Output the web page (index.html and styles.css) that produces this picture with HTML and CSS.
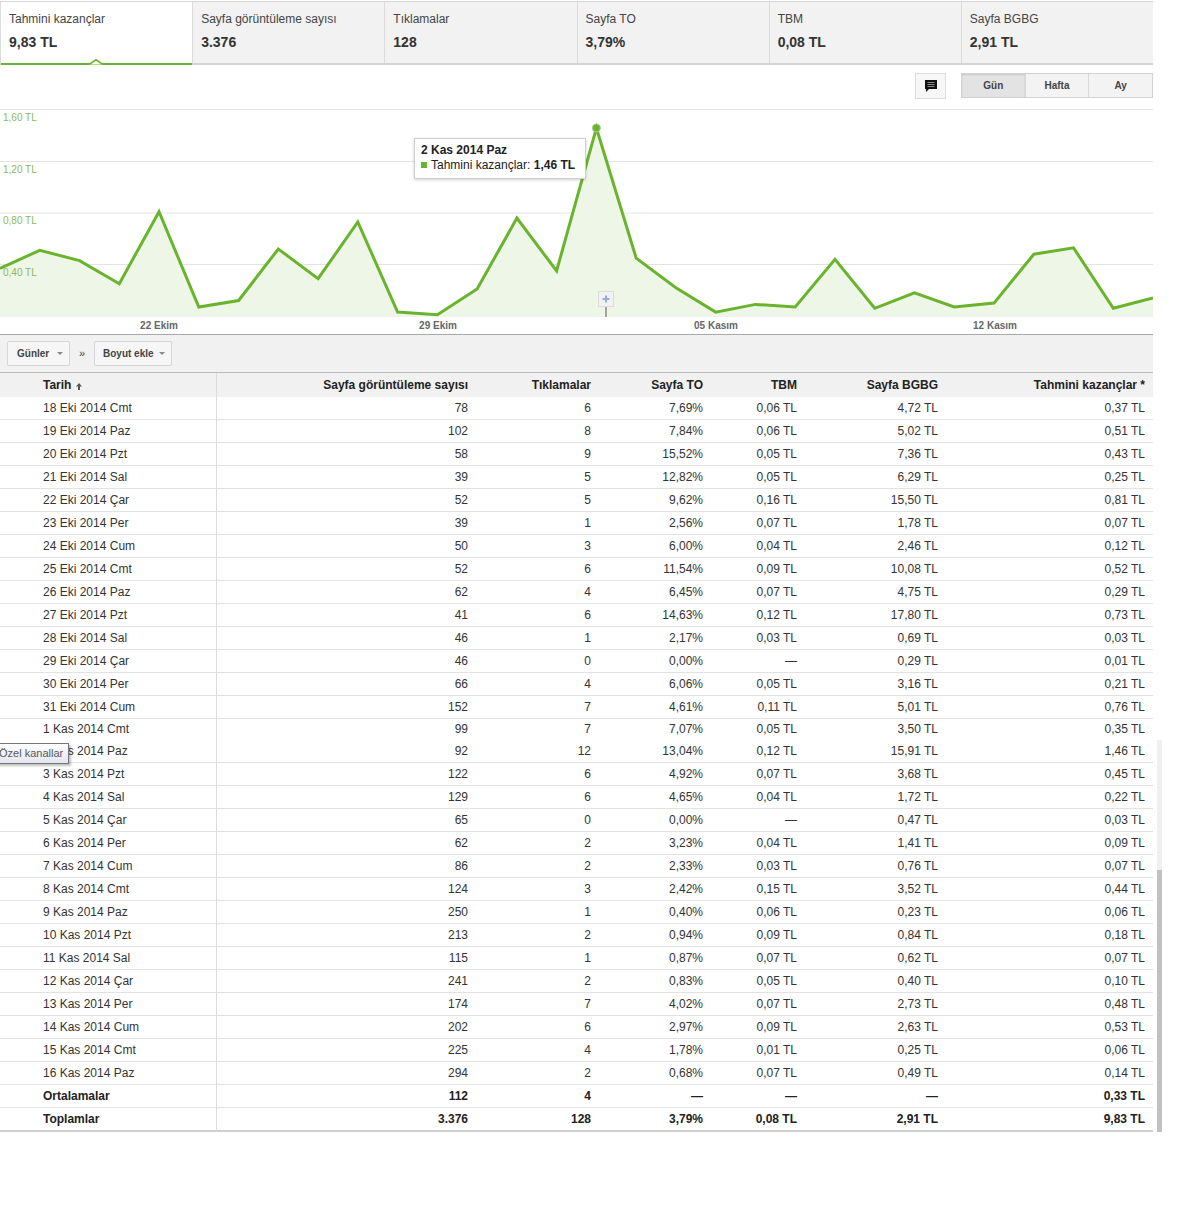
FILE: index.html
```html
<!DOCTYPE html>
<html lang="tr">
<head>
<meta charset="utf-8">
<title>Performans raporu</title>
<link rel="stylesheet" href="styles.css">
</head>
<body>
<div class="page">
  <div class="tabs">
    <div class="tab active">
      <div class="tab-label">Tahmini kazançlar</div>
      <div class="tab-value">9,83 TL</div>
      <svg class="notch" width="14" height="6" viewBox="0 0 14 6"><polyline points="0,5.5 7,0.8 14,5.5" fill="#fff" stroke="#6ab42d" stroke-width="1.6"/></svg>
    </div>
    <div class="tab"><div class="tab-label">Sayfa görüntüleme sayısı</div><div class="tab-value">3.376</div></div>
    <div class="tab"><div class="tab-label">Tıklamalar</div><div class="tab-value">128</div></div>
    <div class="tab"><div class="tab-label">Sayfa TO</div><div class="tab-value">3,79%</div></div>
    <div class="tab"><div class="tab-label">TBM</div><div class="tab-value">0,08 TL</div></div>
    <div class="tab"><div class="tab-label">Sayfa BGBG</div><div class="tab-value">2,91 TL</div></div>
  </div>

  <div class="controls">
    <div class="note-btn">
      <svg width="12" height="13" viewBox="0 0 12 13"><path d="M0 0H12V9H4L1 12V9H0Z" fill="#111"/><path d="M2.5 2.5H9.5M2.5 4.5H9.5M2.5 6.5H9.5" stroke="#8a8a8a" stroke-width="1"/></svg>
    </div>
    <div class="seg">
      <span class="on">Gün</span>
      <span>Hafta</span>
      <span>Ay</span>
    </div>
  </div>

  <div class="chart">
    <svg class="chart-svg" width="1153" height="225" viewBox="0 0 1153 225">
      <g stroke="#e3e3e3" stroke-width="1">
        <line x1="0" y1="0.5" x2="1153" y2="0.5"/>
        <line x1="0" y1="52.5" x2="1153" y2="52.5"/>
        <line x1="0" y1="104" x2="1153" y2="104"/>
        <line x1="0" y1="155.5" x2="1153" y2="155.5"/>
        <line x1="0" y1="207" x2="1153" y2="207"/>
      </g>
      <polygon fill="#eef6e7" points="0,159.4 39.8,141.3 79.5,151.6 119.3,174.8 159,102.7 198.8,198 238.6,191.5 278.3,140 318.1,169.7 357.8,113 397.6,203.1 437.4,205.7 477.1,180 516.9,109.1 556.6,161.9 596.4,19 636.2,149.1 675.9,178.7 715.7,203.1 755.4,195.4 795.2,198 835,150.4 874.7,199.3 914.5,183.8 954.2,198 994,194.1 1033.8,145.2 1073.5,138.8 1113.3,199.3 1153,189 1153,207 0,207"/>
      <g class="ylab">
        <text x="3" y="12">1,60 TL</text>
        <text x="3" y="64">1,20 TL</text>
        <text x="3" y="115">0,80 TL</text>
        <text x="3" y="167">0,40 TL</text>
      </g>
      <line x1="606" y1="198" x2="606" y2="208" stroke="#555" stroke-width="1"/>
      <rect x="598.5" y="182.5" width="15" height="15" fill="#f2f2f2" stroke="#dcdcdc"/>
      <path d="M606 186.5V193.5M602.5 190H609.5" stroke="#8fb0d8" stroke-width="2"/>
      <polyline fill="none" stroke="#6ab42d" stroke-width="3" stroke-linejoin="miter" points="0,159.4 39.8,141.3 79.5,151.6 119.3,174.8 159,102.7 198.8,198 238.6,191.5 278.3,140 318.1,169.7 357.8,113 397.6,203.1 437.4,205.7 477.1,180 516.9,109.1 556.6,161.9 596.4,19 636.2,149.1 675.9,178.7 715.7,203.1 755.4,195.4 795.2,198 835,150.4 874.7,199.3 914.5,183.8 954.2,198 994,194.1 1033.8,145.2 1073.5,138.8 1113.3,199.3 1153,189"/>
      <circle cx="596.4" cy="19" r="4" fill="#6ab42d" stroke="#a8c99a" stroke-width="1"/>
      <g class="xlab">
        <text x="159" y="220">22 Ekim</text>
        <text x="438" y="220">29 Ekim</text>
        <text x="716" y="220">05 Kasım</text>
        <text x="995" y="220">12 Kasım</text>
      </g>
    </svg>
    <div class="chart-tip">
      <div class="tip-title">2 Kas 2014 Paz</div>
      <div class="tip-line"><span class="tip-dot"></span>Tahmini kazançlar: <b>1,46 TL</b></div>
    </div>
  </div>

  <div class="tablebar">
    <div class="tb-btn wide">Günler <span class="caret"></span></div>
    <span class="raquo">»</span>
    <div class="tb-btn">Boyut ekle <span class="caret"></span></div>
  </div>

  <table class="report">
    <colgroup>
      <col class="c1"><col class="c2"><col class="c3"><col class="c4"><col class="c5"><col class="c6"><col class="c7">
    </colgroup>
    <thead>
      <tr>
        <th class="date">Tarih <svg class="sort" width="6" height="7" viewBox="0 0 6 7"><path d="M3 0L6 3.5H4V7H2V3.5H0Z" fill="#555"/></svg></th>
        <th>Sayfa görüntüleme sayısı</th>
        <th>Tıklamalar</th>
        <th>Sayfa TO</th>
        <th>TBM</th>
        <th>Sayfa BGBG</th>
        <th>Tahmini kazançlar *</th>
      </tr>
    </thead>
    <tbody>
      <tr><td>18 Eki 2014 Cmt</td><td>78</td><td>6</td><td>7,69%</td><td>0,06 TL</td><td>4,72 TL</td><td>0,37 TL</td></tr>
      <tr><td>19 Eki 2014 Paz</td><td>102</td><td>8</td><td>7,84%</td><td>0,06 TL</td><td>5,02 TL</td><td>0,51 TL</td></tr>
      <tr><td>20 Eki 2014 Pzt</td><td>58</td><td>9</td><td>15,52%</td><td>0,05 TL</td><td>7,36 TL</td><td>0,43 TL</td></tr>
      <tr><td>21 Eki 2014 Sal</td><td>39</td><td>5</td><td>12,82%</td><td>0,05 TL</td><td>6,29 TL</td><td>0,25 TL</td></tr>
      <tr><td>22 Eki 2014 Çar</td><td>52</td><td>5</td><td>9,62%</td><td>0,16 TL</td><td>15,50 TL</td><td>0,81 TL</td></tr>
      <tr><td>23 Eki 2014 Per</td><td>39</td><td>1</td><td>2,56%</td><td>0,07 TL</td><td>1,78 TL</td><td>0,07 TL</td></tr>
      <tr><td>24 Eki 2014 Cum</td><td>50</td><td>3</td><td>6,00%</td><td>0,04 TL</td><td>2,46 TL</td><td>0,12 TL</td></tr>
      <tr><td>25 Eki 2014 Cmt</td><td>52</td><td>6</td><td>11,54%</td><td>0,09 TL</td><td>10,08 TL</td><td>0,52 TL</td></tr>
      <tr><td>26 Eki 2014 Paz</td><td>62</td><td>4</td><td>6,45%</td><td>0,07 TL</td><td>4,75 TL</td><td>0,29 TL</td></tr>
      <tr><td>27 Eki 2014 Pzt</td><td>41</td><td>6</td><td>14,63%</td><td>0,12 TL</td><td>17,80 TL</td><td>0,73 TL</td></tr>
      <tr><td>28 Eki 2014 Sal</td><td>46</td><td>1</td><td>2,17%</td><td>0,03 TL</td><td>0,69 TL</td><td>0,03 TL</td></tr>
      <tr><td>29 Eki 2014 Çar</td><td>46</td><td>0</td><td>0,00%</td><td>—</td><td>0,29 TL</td><td>0,01 TL</td></tr>
      <tr><td>30 Eki 2014 Per</td><td>66</td><td>4</td><td>6,06%</td><td>0,05 TL</td><td>3,16 TL</td><td>0,21 TL</td></tr>
      <tr><td>31 Eki 2014 Cum</td><td>152</td><td>7</td><td>4,61%</td><td>0,11 TL</td><td>5,01 TL</td><td>0,76 TL</td></tr>
      <tr class="joined"><td>1 Kas 2014 Cmt</td><td>99</td><td>7</td><td>7,07%</td><td>0,05 TL</td><td>3,50 TL</td><td>0,35 TL</td></tr>
      <tr><td>2 Kas 2014 Paz</td><td>92</td><td>12</td><td>13,04%</td><td>0,12 TL</td><td>15,91 TL</td><td>1,46 TL</td></tr>
      <tr><td>3 Kas 2014 Pzt</td><td>122</td><td>6</td><td>4,92%</td><td>0,07 TL</td><td>3,68 TL</td><td>0,45 TL</td></tr>
      <tr><td>4 Kas 2014 Sal</td><td>129</td><td>6</td><td>4,65%</td><td>0,04 TL</td><td>1,72 TL</td><td>0,22 TL</td></tr>
      <tr><td>5 Kas 2014 Çar</td><td>65</td><td>0</td><td>0,00%</td><td>—</td><td>0,47 TL</td><td>0,03 TL</td></tr>
      <tr><td>6 Kas 2014 Per</td><td>62</td><td>2</td><td>3,23%</td><td>0,04 TL</td><td>1,41 TL</td><td>0,09 TL</td></tr>
      <tr><td>7 Kas 2014 Cum</td><td>86</td><td>2</td><td>2,33%</td><td>0,03 TL</td><td>0,76 TL</td><td>0,07 TL</td></tr>
      <tr><td>8 Kas 2014 Cmt</td><td>124</td><td>3</td><td>2,42%</td><td>0,15 TL</td><td>3,52 TL</td><td>0,44 TL</td></tr>
      <tr><td>9 Kas 2014 Paz</td><td>250</td><td>1</td><td>0,40%</td><td>0,06 TL</td><td>0,23 TL</td><td>0,06 TL</td></tr>
      <tr><td>10 Kas 2014 Pzt</td><td>213</td><td>2</td><td>0,94%</td><td>0,09 TL</td><td>0,84 TL</td><td>0,18 TL</td></tr>
      <tr><td>11 Kas 2014 Sal</td><td>115</td><td>1</td><td>0,87%</td><td>0,07 TL</td><td>0,62 TL</td><td>0,07 TL</td></tr>
      <tr><td>12 Kas 2014 Çar</td><td>241</td><td>2</td><td>0,83%</td><td>0,05 TL</td><td>0,40 TL</td><td>0,10 TL</td></tr>
      <tr><td>13 Kas 2014 Per</td><td>174</td><td>7</td><td>4,02%</td><td>0,07 TL</td><td>2,73 TL</td><td>0,48 TL</td></tr>
      <tr><td>14 Kas 2014 Cum</td><td>202</td><td>6</td><td>2,97%</td><td>0,09 TL</td><td>2,63 TL</td><td>0,53 TL</td></tr>
      <tr><td>15 Kas 2014 Cmt</td><td>225</td><td>4</td><td>1,78%</td><td>0,01 TL</td><td>0,25 TL</td><td>0,06 TL</td></tr>
      <tr><td>16 Kas 2014 Paz</td><td>294</td><td>2</td><td>0,68%</td><td>0,07 TL</td><td>0,49 TL</td><td>0,14 TL</td></tr>
      <tr class="sum"><td>Ortalamalar</td><td>112</td><td>4</td><td>—</td><td>—</td><td>—</td><td>0,33 TL</td></tr>
      <tr class="sum last"><td>Toplamlar</td><td>3.376</td><td>128</td><td>3,79%</td><td>0,08 TL</td><td>2,91 TL</td><td>9,83 TL</td></tr>
    </tbody>
  </table>
</div>

<div class="vscroll"><div class="vthumb"></div></div>
<div class="os-tip">Özel kanallar</div>
</body>
</html>
```

FILE: styles.css
```css
* {
  box-sizing: border-box;
}

html, body {
  background: #fff;
}

body {
  margin: 0;
  font-family: "Liberation Sans", Arial, sans-serif;
  color: #333;
  position: relative;
}

.page {
  width: 1153px;
}

/* ---------- metric tabs ---------- */
.tabs {
  display: grid;
  grid-template-columns: repeat(6, 1fr);
  margin-top: 1px;
  border-top: 1px solid #d6d6d6;
  border-bottom: 2px solid #d4d4d4;
}

.tab {
  position: relative;
  height: 61px;
  padding: 9px 0 0 8px;
  background: #f2f2f2;
  border-left: 1px solid #dcdcdc;
}

.tab.active {
  background: #fff;
}

.tab.active::after {
  content: "";
  position: absolute;
  left: 0;
  right: 0;
  bottom: -2px;
  height: 2px;
  background: #6ab42d;
}

.notch {
  position: absolute;
  left: 88px;
  bottom: -2px;
  z-index: 2;
}

.tab-label {
  font-size: 12px;
  line-height: 16px;
  color: #444;
}

.tab-value {
  margin-top: 6px;
  font-size: 14px;
  line-height: 18px;
  font-weight: bold;
  color: #333;
}

/* ---------- chart controls ---------- */
.controls {
  height: 44px;
  display: flex;
  justify-content: flex-end;
  align-items: flex-start;
  gap: 15px;
  padding-top: 8px;
}

.note-btn {
  width: 31px;
  height: 26px;
  display: flex;
  align-items: center;
  justify-content: center;
  background: #f7f7f7;
  border: 1px solid #dcdcdc;
}

.seg {
  display: flex;
  width: 192px;
  height: 25px;
  border: 1px solid #d2d2d2;
}

.seg span {
  flex: 1;
  display: flex;
  align-items: center;
  justify-content: center;
  font-size: 10px;
  font-weight: bold;
  color: #444;
  background: #f3f3f3;
  border-left: 1px solid #d8d8d8;
}

.seg span:first-child {
  border-left: 0;
}

.seg span.on {
  background: #e3e3e3;
  box-shadow: inset 0 1px 2px rgba(0, 0, 0, 0.12);
}

/* ---------- chart ---------- */
.chart {
  position: relative;
  height: 226px;
  border-bottom: 1px solid #a9a9a9;
}

.chart-svg {
  display: block;
}

.ylab text {
  font-family: "Liberation Sans", Arial, sans-serif;
  font-size: 10px;
  fill: #8cb85c;
}

.xlab text {
  font-family: "Liberation Sans", Arial, sans-serif;
  font-size: 10px;
  font-weight: bold;
  fill: #666;
  text-anchor: middle;
}

.chart-tip {
  position: absolute;
  left: 414px;
  top: 29px;
  width: 172px;
  height: 41px;
  padding: 4px 6px 0 6px;
  background: #fff;
  border: 1px solid #cfcfcf;
  box-shadow: 0 1px 3px rgba(0, 0, 0, 0.18);
  font-size: 12px;
  line-height: 15px;
  color: #222;
}

.tip-title {
  font-weight: bold;
}

.tip-dot {
  display: inline-block;
  width: 6px;
  height: 6px;
  margin: 0 4px 1px 0;
  background: #6ab42d;
}

/* ---------- table toolbar ---------- */
.tablebar {
  height: 38px;
  display: flex;
  align-items: flex-start;
  padding: 6px 0 0 7px;
  background: #f1f1f1;
  border-bottom: 1px solid #bbb;
}

.tb-btn {
  height: 25px;
  display: flex;
  align-items: center;
  justify-content: space-between;
  gap: 5px;
  padding: 0 6px 0 8px;
  font-size: 10px;
  font-weight: bold;
  color: #444;
  background: #f6f6f6;
  border: 1px solid #d6d6d6;
  border-radius: 2px;
}

.tb-btn.wide {
  width: 63px;
  padding-left: 9px;
}

.caret {
  width: 0;
  height: 0;
  border-left: 3px solid transparent;
  border-right: 3px solid transparent;
  border-top: 3px solid #888;
}

.raquo {
  width: 24px;
  line-height: 25px;
  text-align: center;
  font-size: 11px;
  color: #444;
}

/* ---------- table ---------- */
.report {
  width: 1153px;
  table-layout: fixed;
  border-collapse: separate;
  border-spacing: 0;
  font-size: 12px;
}

.c1 { width: 217px; }
.c2 { width: 259px; }
.c3 { width: 123px; }
.c4 { width: 112px; }
.c5 { width: 94px; }
.c6 { width: 141px; }
.c7 { width: 207px; }

.report th {
  height: 24px;
  line-height: 24px;
  padding: 0 8px 0 0;
  text-align: right;
  font-weight: bold;
  color: #222;
  background: #f1f1f1;
  white-space: nowrap;
}

.report th.date {
  text-align: left;
  padding-left: 43px;
  border-right: 1px solid #dcdcdc;
}

.sort {
  margin-left: 1px;
  vertical-align: -1px;
}

.report td {
  height: 23px;
  line-height: 22px;
  padding: 0 8px 0 0;
  text-align: right;
  color: #333;
  border-bottom: 1px solid #e2e2e2;
  white-space: nowrap;
}

.report td:first-child {
  text-align: left;
  padding-left: 43px;
  border-right: 1px solid #dcdcdc;
}

.report tr.joined td {
  height: 21px;
  line-height: 21px;
  border-bottom: 0;
}

.report tr.sum td {
  font-weight: bold;
  color: #222;
}

.report tr.last td {
  border-bottom: 2px solid #cfcfcf;
}

/* ---------- overlays ---------- */
.vscroll {
  position: absolute;
  left: 1157px;
  top: 740px;
  width: 5px;
  height: 392px;
  background: #f0f0f0;
}

.vthumb {
  margin-top: 130px;
  height: 262px;
  background: #c1c1c1;
}

.os-tip {
  position: absolute;
  left: -7px;
  top: 743px;
  height: 21px;
  padding: 0 5px;
  font-size: 11px;
  line-height: 19px;
  color: #575757;
  background: linear-gradient(#ffffff, #e4e5f0);
  border: 1px solid #767676;
  box-shadow: 2px 2px 2px rgba(0, 0, 0, 0.25);
}
```
